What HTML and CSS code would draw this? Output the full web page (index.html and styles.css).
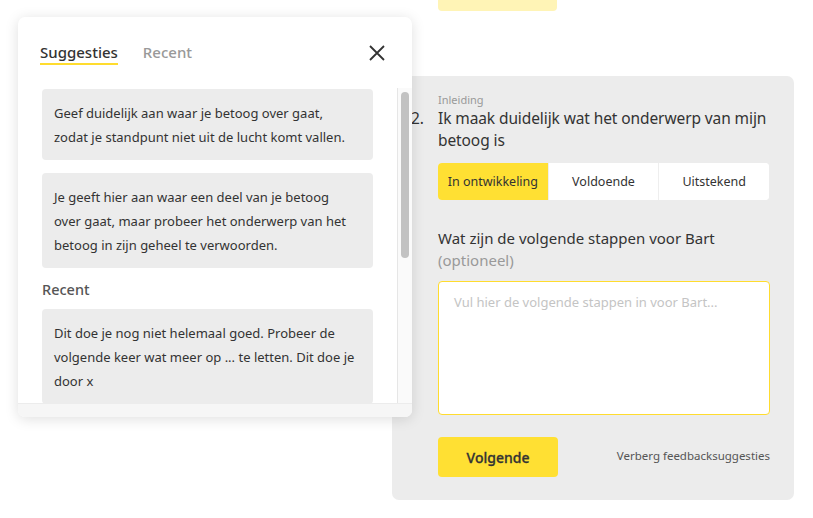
FILE: index.html
```html
<!DOCTYPE html>
<html lang="nl">
<head>
<meta charset="utf-8">
<link rel="stylesheet" href="styles.css">
</head>
<body>
<main class="column">
  <div class="prev-button"></div>
  <section class="card">
    <div class="category">Inleiding</div>
    <h2 class="question"><span class="num">2.</span><span>Ik maak duidelijk wat het onderwerp van mijn<br>betoog is</span></h2>
    <div class="segmented">
      <button class="seg active">In ontwikkeling</button>
      <button class="seg">Voldoende</button>
      <button class="seg">Uitstekend</button>
    </div>
    <label class="field-label">Wat zijn de volgende stappen voor Bart<br><span class="optional">(optioneel)</span></label>
    <textarea class="steps" placeholder="Vul hier de volgende stappen in voor Bart..."></textarea>
    <div class="actions">
      <button class="primary">Volgende</button>
      <a class="hide-link">Verberg feedbacksuggesties</a>
    </div>
  </section>
</main>

<aside class="popup">
  <header class="popup-head">
    <nav class="tabs">
      <span class="tab active">Suggesties</span>
      <span class="tab">Recent</span>
    </nav>
    <svg class="close" width="16" height="16" viewBox="0 0 16 16"><path d="M1 1 L15 15 M15 1 L1 15" stroke="#333" stroke-width="1.8" fill="none"/></svg>
  </header>
  <div class="scroll">
    <div class="list">
      <div class="sugg">Geef duidelijk aan waar je betoog over gaat,<br>zodat je standpunt niet uit de lucht komt vallen.</div>
      <div class="sugg">Je geeft hier aan waar een deel van je betoog<br>over gaat, maar probeer het onderwerp van het<br>betoog in zijn geheel te verwoorden.</div>
      <h3 class="list-title">Recent</h3>
      <div class="sugg">Dit doe je nog niet helemaal goed. Probeer de<br>volgende keer wat meer op ... te letten. Dit doe je<br>door x</div>
    </div>
    <div class="vbar"><div class="thumb"></div></div>
  </div>
  <div class="hbar"></div>
</aside>
</body>
</html>
```

FILE: styles.css
```css
* { box-sizing: border-box; }
html, body { margin: 0; background: #fff; }
body {
  font-family: "Noto Sans", "Open Sans", sans-serif;
  color: #333;
  width: 813px;
  height: 518px;
  overflow: hidden;
  position: relative;
}
.column {
  margin-left: 392px;
  width: 402px;
}
.prev-button {
  margin-left: 46px;
  width: 119px;
  height: 11px;
  background: #fff4b6;
  border-radius: 0 0 4px 4px;
}
.card {
  margin-top: 65px;
  background: #ececec;
  border-radius: 7px;
  padding: 17px 24px 24px 46px;
  height: 424px;
}
.category {
  font-size: 11px;
  color: #999;
  line-height: 14px;
}
.question {
  margin: 0;
  font-size: 15.5px;
  font-weight: 400;
  line-height: 22px;
  display: flex;
  margin-left: -27px;
  color: #333;
  white-space: nowrap;
  letter-spacing: -0.1px;
}
.question .num { width: 27px; flex: none; }
.segmented {
  margin-top: 12px;
  display: flex;
  background: #fff;
  border-radius: 4px;
  height: 37px;
  overflow: hidden;
  width: 331px;
}
.seg {
  flex: 1;
  border: 0;
  background: #fff;
  font-family: inherit;
  font-size: 12.5px;
  color: #333;
  padding: 0;
}
.seg + .seg { border-left: 1px solid #eee; }
.seg.active { background: #ffe033; }
.field-label {
  display: block;
  margin-top: 27px;
  font-size: 15px;
  line-height: 22px;
  color: #333;
}
.optional { color: #999; }
.steps {
  display: block;
  margin-top: 10px;
  width: 332px;
  height: 134px;
  border: 1px solid #ffdc2e;
  border-radius: 4px;
  background: #fff;
  resize: none;
  font-family: inherit;
  font-size: 13px;
  padding: 11px 15px;
  outline: none;
}
.steps::placeholder { color: #c4c4c4; }
.actions {
  margin-top: 22px;
  display: flex;
  align-items: center;
  justify-content: space-between;
  width: 332px;
}
.primary {
  width: 120px;
  height: 40px;
  border: 0;
  border-radius: 4px;
  background: #ffe033;
  font-family: inherit;
  font-size: 14px;
  font-weight: 500;
  color: #333;
  -webkit-text-stroke: 0.3px #333;
}
.hide-link {
  font-size: 11.5px;
  line-height: 14px;
  color: #555;
  margin-bottom: 3px;
}

.popup {
  position: absolute;
  left: 18px;
  top: 17px;
  width: 394px;
  height: 400px;
  background: #fff;
  border-radius: 7px;
  box-shadow: 0 2px 14px rgba(0,0,0,0.13);
  overflow: hidden;
  display: flex;
  flex-direction: column;
}
.popup-head {
  display: flex;
  justify-content: space-between;
  align-items: flex-start;
  padding: 26px 27px 0 22px;
  height: 71px;
}
.tabs { display: flex; gap: 25px; }
.tab {
  font-size: 15px;
  font-weight: 500;
  color: #999;
  line-height: 19px;
  padding-bottom: 1px;
}
.tab.active {
  color: #333;
  border-bottom: 2px solid #ffdc2e;
}
.close { margin-top: 2px; }
.scroll {
  flex: 1;
  display: flex;
  overflow: hidden;
}
.list {
  flex: none;
  width: 379px;
  padding: 1px 0 0 24px;
}
.sugg {
  width: 331px;
  background: #ececec;
  border-radius: 4px;
  padding: 12px 12px 11px 12px;
  font-size: 13px;
  line-height: 24px;
  color: #333;
  margin-bottom: 13px;
  white-space: nowrap;
}
.list-title {
  margin: -2px 0 10px;
  font-size: 14.5px;
  font-weight: 500;
  line-height: 20px;
  color: #555;
}
.vbar {
  width: 15px;
  border-left: 1px solid #e6e6e6;
  background: #fafafa;
  padding: 4px 3px 0 3px;
}
.thumb {
  width: 8px;
  height: 166px;
  border-radius: 4px;
  background: #c2c2c2;
}
.hbar {
  height: 14px;
  background: #f6f6f6;
  border-top: 1px solid #ececec;
}
```
